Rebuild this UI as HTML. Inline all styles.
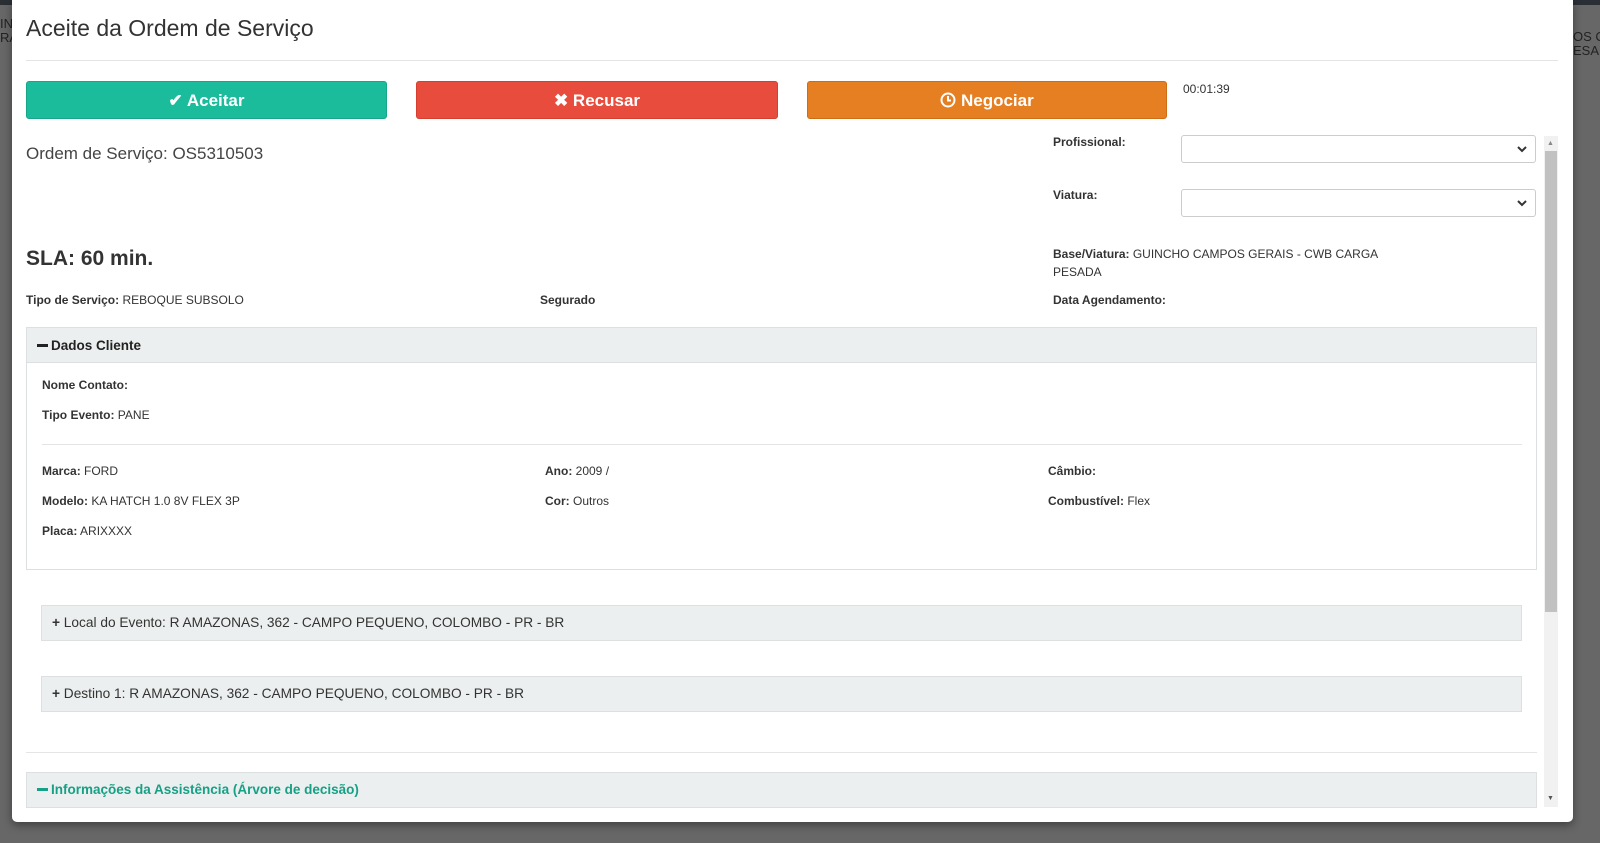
<!DOCTYPE html>
<html><head><meta charset="utf-8"><style>
*{box-sizing:border-box;margin:0;padding:0}
body{width:1600px;height:843px;overflow:hidden;background:#676767;font-family:"Liberation Sans",sans-serif;color:#333;position:relative}
.bgtop{position:absolute;left:0;top:0;width:1600px;height:5px;background:#2a2f36}
.bgtxt{position:absolute;color:#222;font-size:13px;line-height:14px}
.modal{position:absolute;left:12px;top:0;width:1561px;height:822px;background:#fff;border-radius:0 0 5px 5px;box-shadow:0 3px 9px rgba(0,0,0,.4)}
.a{position:absolute;white-space:nowrap}
.btn{position:absolute;top:81px;height:38px;border-radius:3px;color:#fff;font-weight:bold;font-size:17px;text-align:center;line-height:38px}
.lbl{font-size:12px}
.lbl b{font-weight:bold}
.sel{position:absolute;left:1169px;width:355px;height:28px;border:1px solid #ccc;border-radius:3px;background:#fff}
.sel svg{position:absolute;right:8px;top:10px}
.addr{position:absolute;left:29px;width:1481px;height:36px;background:#ecefef;border:1px solid #dde0e0;font-size:13.7px;line-height:34px;padding-left:10px}
.mn{display:inline-block;width:11px;height:3px;background:currentColor;vertical-align:middle;margin-right:3px;margin-top:-2px}
</style></head><body>
<div class="bgtop"></div>
<div class="bgtxt" style="left:0;top:17px">IN<br>RA</div>
<div class="bgtxt" style="left:1573px;top:30px">OS C<br>ESAD</div>
<div class="modal">
<div class="a" style="left:14px;top:15px;font-size:23px;color:#333">Aceite da Ordem de Serviço</div>
<div class="a" style="left:14px;top:60px;width:1532px;height:1px;background:#e5e5e5"></div>
<div class="btn" style="left:14px;width:361px;background:#1abc9c;border:1px solid #17a689">✔ Aceitar</div>
<div class="btn" style="left:404px;width:362px;background:#e74c3c;border:1px solid #d43f2f">✖ Recusar</div>
<div class="btn" style="left:795px;width:360px;background:#e67e22;border:1px solid #cf6d15"><svg width="16" height="16" viewBox="0 0 16 16" style="vertical-align:-2px"><circle cx="8" cy="8" r="6.5" fill="none" stroke="#fff" stroke-width="2"/><path d="M8 4v4.5h3" fill="none" stroke="#fff" stroke-width="2"/></svg> Negociar</div>
<div class="a" style="left:1171px;top:82px;font-size:12px">00:01:39</div>
<div class="a" style="left:14px;top:144px;font-size:17px;color:#444">Ordem de Serviço: OS5310503</div>
<div class="a lbl" style="left:1041px;top:135px"><b>Profissional:</b></div>
<div class="sel" style="top:135px"><svg width="10" height="7"><path d="M1 1l4 4 4-4" fill="none" stroke="#333" stroke-width="2"/></svg></div>
<div class="a lbl" style="left:1041px;top:188px"><b>Viatura:</b></div>
<div class="sel" style="top:189px"><svg width="10" height="7"><path d="M1 1l4 4 4-4" fill="none" stroke="#333" stroke-width="2"/></svg></div>
<div class="a" style="left:14px;top:247px;font-size:21px;font-weight:bold;color:#333">SLA: 60 min.</div>
<div class="a lbl" style="left:1041px;top:245px;line-height:18px"><b>Base/Viatura:</b> GUINCHO CAMPOS GERAIS - CWB CARGA<br>PESADA</div>
<div class="a lbl" style="left:14px;top:293px"><b>Tipo de Serviço:</b> REBOQUE SUBSOLO</div>
<div class="a lbl" style="left:528px;top:293px"><b>Segurado</b></div>
<div class="a lbl" style="left:1041px;top:293px"><b>Data Agendamento:</b></div>
<div class="a" style="left:1532px;top:136px;width:14px;height:671px;background:#f1f1f1"></div>
<div class="a" style="left:1533px;top:151px;width:12px;height:461px;background:#c1c1c1"></div>
<div class="a" style="left:1535px;top:140px;font-size:7px;color:#888">▲</div>
<div class="a" style="left:1535px;top:795px;font-size:7px;color:#555">▼</div>
<div class="a" style="left:14px;top:327px;width:1511px;height:243px;border:1px solid #dde0e0">
 <div style="height:35px;background:#ecefef;border-bottom:1px solid #dde0e0;font-weight:bold;font-size:13.5px;line-height:35px;padding-left:10px;color:#222"><span class="mn"></span>Dados Cliente</div>
 <div class="a lbl" style="left:15px;top:50px"><b>Nome Contato:</b></div>
 <div class="a lbl" style="left:15px;top:80px"><b>Tipo Evento:</b> PANE</div>
 <div class="a" style="left:15px;top:116px;width:1480px;height:1px;background:#e5e5e5"></div>
 <div class="a lbl" style="left:15px;top:136px"><b>Marca:</b> FORD</div>
 <div class="a lbl" style="left:15px;top:166px"><b>Modelo:</b> KA HATCH 1.0 8V FLEX 3P</div>
 <div class="a lbl" style="left:15px;top:196px"><b>Placa:</b> ARIXXXX</div>
 <div class="a lbl" style="left:518px;top:136px"><b>Ano:</b> 2009 /</div>
 <div class="a lbl" style="left:518px;top:166px"><b>Cor:</b> Outros</div>
 <div class="a lbl" style="left:1021px;top:136px"><b>Câmbio:</b></div>
 <div class="a lbl" style="left:1021px;top:166px"><b>Combustível:</b> Flex</div>
</div>
<div class="addr" style="top:605px"><b>+</b> Local do Evento: R AMAZONAS, 362 - CAMPO PEQUENO, COLOMBO - PR - BR</div>
<div class="addr" style="top:676px"><b>+</b> Destino 1: R AMAZONAS, 362 - CAMPO PEQUENO, COLOMBO - PR - BR</div>
<div class="a" style="left:14px;top:752px;width:1511px;height:1px;background:#e5e5e5"></div>
<div class="a" style="left:14px;top:772px;width:1511px;height:36px;background:#ecefef;border:1px solid #dde0e0;color:#16a085;font-weight:bold;font-size:13.5px;line-height:34px;padding-left:10px"><span class="mn"></span>Informações da Assistência (Árvore de decisão)</div>
</div>
</body></html>
